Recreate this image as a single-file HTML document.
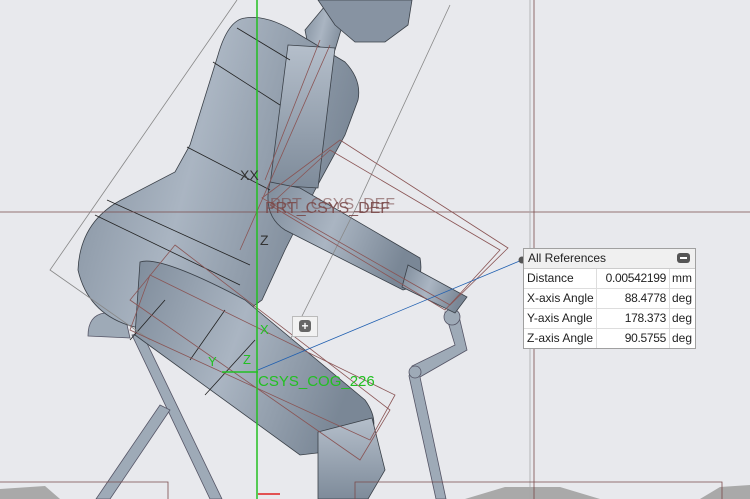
<!DOCTYPE html>
<html><head><meta charset="utf-8"><style>
html,body{margin:0;padding:0;width:750px;height:499px;overflow:hidden;background:#e8e9ed;font-family:"Liberation Sans",sans-serif}
svg{position:absolute;left:0;top:0}
.tb{position:absolute;left:523px;top:248px;width:171px;background:#fff;border:1px solid #a0a0a0;font-size:12px;color:#222}
.tb .h{height:19px;background:#f0f0f0;line-height:19px;padding-left:4px;position:relative;border-bottom:1px solid #ccc}
.tb .h i{position:absolute;right:5px;top:4px;width:13px;height:10px;border-radius:3px;background:#555}
.tb .h i:after{content:"";position:absolute;left:3px;top:4px;width:7px;height:2px;background:#fff}
.r{display:flex;height:19px;line-height:19px;border-bottom:1px solid #ddd;white-space:nowrap}
.r span:nth-child(1){width:69px;padding-left:3px;border-right:1px solid #ddd}
.r span:nth-child(2){width:69px;text-align:right;padding-right:3px;border-right:1px solid #ddd;letter-spacing:-0.3px}
.r span:nth-child(3){padding-left:2px}
.pb{position:absolute;left:292px;top:316px;width:24px;height:19px;background:#f2f2f2;border:1px solid #bbb}
.pb:after{content:"+";position:absolute;left:6px;top:3px;width:12px;height:12px;border-radius:3px;background:#666;color:#fff;font-size:12px;line-height:12px;text-align:center;font-weight:bold}
</style></head><body>
<svg width="750" height="499" viewBox="0 0 750 499">
<defs>
<linearGradient id="g" x1="0" y1="0" x2="1" y2="0.3"><stop offset="0" stop-color="#7f8c9b"/><stop offset="0.5" stop-color="#aab5c2"/><stop offset="1" stop-color="#7a8796"/></linearGradient>
<linearGradient id="g2" x1="0" y1="0" x2="0" y2="1"><stop offset="0" stop-color="#b5bfcb"/><stop offset="1" stop-color="#7e8b9a"/></linearGradient>
</defs>
<polygon points="0,489 45,486 60,499 0,499" fill="#a9a9a9"/>
<polygon points="465,499 505,487 560,487 600,499" fill="#a9a9a9"/>
<polygon points="700,499 720,487 750,485 750,499" fill="#a9a9a9"/>
<g stroke="#556" stroke-width="0.8" fill="#9eaab7">
<polygon points="132,335 142,333 222,499 210,499"/>
<polygon points="160,405 170,410 110,499 96,499"/>
<polygon points="445,312 458,312 467,350 420,377 446,499 436,499 409,376 412,366 455,345"/>
<circle cx="452" cy="317" r="8"/>
<circle cx="415" cy="372" r="6"/>
<path d="M88,336 Q88,315 105,313 L125,316 L130,338 Z"/>
</g>
<g fill="url(#g)" stroke="#3a4048" stroke-width="0.8">
<path d="M305,30 L330,0 L350,0 L335,50 L310,55 Z"/>
<path d="M318,0 L412,0 L408,25 L385,42 L355,42 L335,25 Z" fill="#8793a2"/>
<path d="M245,18 Q268,14 300,35 L345,62 Q362,80 358,100 L345,135 L315,190 L285,250 L262,300 L220,330 L150,330 Q90,322 78,270 Q80,220 125,198 L175,172 L190,145 L218,55 Q228,20 245,18 Z"/>
<path d="M140,262 Q160,255 245,300 L365,400 Q385,428 360,448 L300,455 L135,335 Z"/>
<path d="M318,432 L372,418 L385,470 L368,499 L318,499 Z" fill="url(#g2)"/>
<path d="M288,45 L335,48 L318,188 L270,185 Z" fill="url(#g2)"/>
<path d="M270,182 Q262,215 285,230 L403,290 Q425,285 420,258 L300,188 Z"/>
<path d="M408,265 L467,297 L455,313 L402,287 Z"/>
</g>
<g stroke="#222" stroke-width="0.8" fill="none">
<line x1="237" y1="28" x2="290" y2="60"/><line x1="213" y1="62" x2="280" y2="105"/><line x1="187" y1="147" x2="270" y2="190"/><line x1="107" y1="200" x2="250" y2="265"/><line x1="95" y1="215" x2="240" y2="285"/>
<line x1="165" y1="300" x2="130" y2="340"/><line x1="225" y1="310" x2="190" y2="360"/><line x1="255" y1="340" x2="205" y2="395"/>
</g>
<g fill="none" stroke-width="0.8">
<line x1="0" y1="212" x2="750" y2="212" stroke="#7a4a4a"/>
<line x1="530" y1="0" x2="530" y2="499" stroke="#a8a8a8"/>
<line x1="534" y1="0" x2="534" y2="499" stroke="#7a4a4a"/>
<polyline points="0,482 168,482 168,499" stroke="#7a4a4a"/>
<polyline points="355,499 355,482 722,482 722,499" stroke="#7a4a4a"/>
<polyline points="237,0 50,270 150,340" stroke="#888"/>
<polyline points="450,5 355,210 290,340" stroke="#888"/>
<polygon points="340,140 508,248 450,305 262,198" stroke="#8a5555"/>
<polygon points="330,150 500,250 445,310 270,205" stroke="#8a5555"/>
<polygon points="175,245 390,410 360,460 130,300" stroke="#8a5555"/>
<polygon points="150,275 395,395 370,440 130,330" stroke="#8a5555"/>
<line x1="265" y1="180" x2="320" y2="40" stroke="#8a5555"/>
<line x1="240" y1="250" x2="330" y2="45" stroke="#8a5555"/>
<line x1="258" y1="370" x2="522" y2="260" stroke="#1f5fb0"/>
<line x1="257" y1="0" x2="257" y2="499" stroke="#22c022" stroke-width="1.5"/>
<line x1="222" y1="372" x2="258" y2="372" stroke="#22c022" stroke-width="1.5"/>
<line x1="258" y1="494" x2="280" y2="494" stroke="#e02020" stroke-width="1.5"/>
</g>
<circle cx="522" cy="260" r="3.5" fill="#555"/>
<text x="240" y="180" font-size="14" fill="#333">XX</text>
<text x="260" y="245" font-size="14" fill="#333">Z</text>
<text x="265" y="213" font-size="16" fill="#7a4a4a" opacity="0.9">PRT_CSYS_DEF</text>
<text x="270" y="209" font-size="16" fill="#7a4a4a" opacity="0.6">PRT_CSYS_DEF</text>
<text x="260" y="334" font-size="13" fill="#22c022">X</text>
<text x="208" y="366" font-size="13" fill="#22c022">Y</text>
<text x="243" y="364" font-size="13" fill="#22c022">Z</text>
<text x="258" y="386" font-size="15" fill="#22c022">CSYS_COG_226</text>
</svg>
<div class="pb"></div>
<div class="tb">
<div class="h">All References<i></i></div>
<div class="r"><span>Distance</span><span>0.00542199</span><span>mm</span></div>
<div class="r"><span>X-axis Angle</span><span>88.4778</span><span>deg</span></div>
<div class="r"><span>Y-axis Angle</span><span>178.373</span><span>deg</span></div>
<div class="r" style="border-bottom:none"><span>Z-axis Angle</span><span>90.5755</span><span>deg</span></div>
</div>
</body></html>
